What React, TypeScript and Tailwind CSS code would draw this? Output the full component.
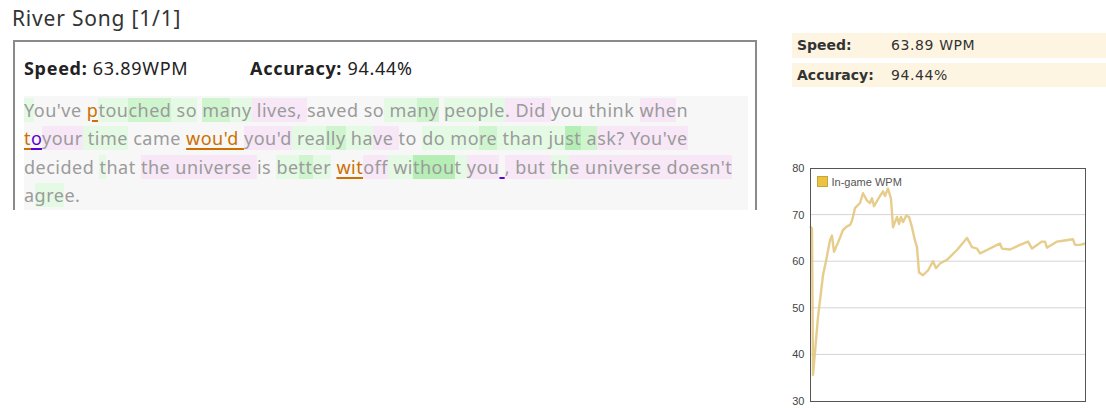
import React from 'react';

type Seg = [string, string];

const tone: Record<string, string> = {
    '': '',
    g1: 'bg-[#e4fae4]',
    g2: 'bg-[#cff5cf]',
    g3: 'bg-[#b5efb5]',
    p: 'bg-[#f7e7f7]',
    e: 'text-[#cc7000] underline decoration-2 underline-offset-[3px]',
    b: 'text-[#5b00d6] underline decoration-2 underline-offset-[3px]',
};

const lines: Seg[][] = [
    [["Y", "g1"], ["ou've ", ""], ["p", "e"], ["tou", "g1"], ["ched", "g2"], [" so", "g1"], [" ", ""], ["ma", "g2"], ["ny", "g1"], [" lives, ", "p"], ["saved ", ""], ["so", ""], [" ma", "g1"], ["ny", "g2"], [" ", ""], ["pe", "g1"], ["ople", "g1"], [". Did ", "p"], ["you", ""], [" think ", ""], ["whe", "p"], ["n", ""]],
    [["t", "e"], ["o", "b"], ["your", "p"], [" time", "g1"], [" came ", ""], ["wou'd ", "e"], ["you'd", "p"], [" rea", "g1"], ["lly", "g2"], [" ha", "g1"], ["ve ", "p"], ["to ", ""], ["do mo", "g1"], ["re", "g2"], [" than ju", "g1"], ["st", "g3"], [" a", "g2"], ["sk? You've", "p"]],
    [["decided ", ""], ["t", "g1"], ["hat ", ""], ["the universe ", "p"], ["is ", ""], ["be", "g1"], ["tt", "g2"], ["er", "g1"], [" ", ""], ["wit", "e"], ["off", "p"], [" wi", "g1"], ["thou", "g3"], ["t ", "g1"], ["you", "p"], [" ", "b"], [", but ", "p"], ["th", "g1"], ["e universe doesn't", "p"]],
    [["a", ""], ["gre", "g1"], ["e.", ""]],
];

// WPM samples, [screen x, value]
const wpm: [number, number][] = [
    [810, 67.5], [812, 67], [813, 35.6], [818, 48], [823, 57], [826, 60], [830, 64.5], [832, 65.5], [834, 62], [838, 64],
    [843, 66.7], [847, 67.5], [850, 67.8], [852, 68.7], [855, 71.4], [860, 72.5], [863, 74.6], [867, 73], [870, 72.5],
    [872, 73.5], [874, 71.8], [880, 74], [883, 75], [885, 74], [888, 75.6], [891, 73.4], [893, 67.3], [897, 69.5],
    [899, 68], [901, 69.5], [903, 68.4], [906, 69.7], [909, 69.5], [912, 67.3], [915, 64.4], [917, 63], [919, 57.6],
    [923, 57], [928, 58], [933, 60], [936, 58.5], [940, 59.5], [947, 60.3], [957, 62.4], [967, 65], [972, 63],
    [977, 62.7], [980, 61.7], [987, 62.4], [997, 63.5], [1000, 63.8], [1002, 62.7], [1010, 62.5], [1020, 63.5],
    [1028, 64.2], [1032, 62.7], [1042, 64.2], [1045, 64.2], [1047, 62.9], [1057, 64.2], [1063, 64.4], [1073, 64.7],
    [1075, 63.5], [1080, 63.5], [1085, 63.8],
];

const yOf = (v: number) => 8 + (80 - v) * 4.66;

const WpmChart: React.FC = () => {
    const pts = wpm.map(([x, v]) => `${x - 790},${yOf(v).toFixed(1)}`).join(' ');
    return (
        <svg width="316" height="249" className="block" style={{ fontFamily: '"Liberation Sans", sans-serif' }}>
            {[70, 60, 50, 40].map((v) => (
                <line key={v} x1="20" x2="295" y1={yOf(v)} y2={yOf(v)} stroke="#d4d4d4" strokeWidth="1" />
            ))}
            {[80, 70, 60, 50, 40, 30].map((v) => (
                <text key={v} x="14.5" y={yOf(v) + 4} textAnchor="end" fontSize="11" fill="#444">{v}</text>
            ))}
            <polyline points={pts} fill="none" stroke="#e3c87f" strokeWidth="2.4" strokeLinejoin="round" opacity="0.9" />
            <rect x="20.5" y="8.5" width="275" height="233" fill="none" stroke="#555" strokeWidth="1" />
            <rect x="27.5" y="16.5" width="10" height="10" fill="#ecc33f" stroke="#c9a340" strokeWidth="1" />
            <text x="41.5" y="25.5" fontSize="11" fill="#555">In-game WPM</text>
        </svg>
    );
};

export default function App() {
    return (
        <div className="w-[1106px] h-[409px] bg-white flex overflow-hidden">
            <div className="w-[790px] pl-[12px]" style={{ fontFamily: '"Noto Sans", sans-serif' }}>
                <h1 className="h-[40px] pt-[3px] text-[21px] leading-[30px] tracking-[0.8px] text-[#333]">
                    River Song [1/1]
                </h1>
                <div className="ml-px w-[744px] h-[170px] border-t-2 border-x-2 border-[#8a8a8a] pl-[9px] flex flex-col">
                    <div className="h-[54px] flex items-center text-[18px] tracking-[0.7px] text-[#222]">
                        <span className="w-[226px]"><b>Speed:</b> 63.89WPM</span>
                        <span><b>Accuracy:</b> 94.44%</span>
                    </div>
                    <div className="w-[724px] flex-1 bg-[#f7f7f7] text-[18px] leading-[28.6px] tracking-[0.5px] text-[#9b9b9b] whitespace-pre">
                        {lines.map((line, i) => (
                            <div key={i}>
                                {line.map(([t, k], j) => (
                                    <span key={j} className={tone[k]}>{t}</span>
                                ))}
                            </div>
                        ))}
                    </div>
                </div>
            </div>
            <div className="flex-1 pt-[33px] flex flex-col" style={{ fontFamily: '"DejaVu Sans", sans-serif' }}>
                <div className="ml-[2px] flex flex-col gap-[5px] text-[14px] text-[#333]">
                    <div className="h-[25px] bg-[#fdf5e2] flex items-center px-[5px]">
                        <span className="w-[94px] font-bold">Speed:</span>
                        <span className="tracking-[0.6px]">63.89 WPM</span>
                    </div>
                    <div className="h-[24px] bg-[#fdf5e2] flex items-center px-[5px]">
                        <span className="w-[94px] font-bold">Accuracy:</span>
                        <span className="tracking-[0.6px]">94.44%</span>
                    </div>
                </div>
                <div className="mt-[73px]">
                    <WpmChart />
                </div>
            </div>
        </div>
    );
}
